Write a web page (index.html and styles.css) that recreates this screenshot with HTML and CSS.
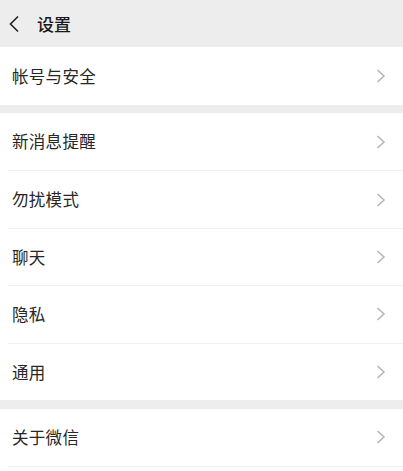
FILE: index.html
```html
<!DOCTYPE html>
<html lang="zh-CN">
<head>
<meta charset="utf-8">
<title>设置</title>
<link rel="stylesheet" href="styles.css">
</head>
<body>
<div class="page">
  <header class="topbar">
    <svg class="back" width="12" height="18" viewBox="0 0 12 18"><path d="M10 1.5 L2.5 9 L10 16.5" fill="none" stroke="#222" stroke-width="1.6"/></svg>
    <span class="title">设置</span>
  </header>
  <div class="group first">
    <div class="row"><span class="label">帐号与安全</span><svg class="arrow" width="10" height="14" viewBox="0 0 10 14"><path d="M1.5 1 L8 7 L1.5 13" fill="none" stroke="#b4b4b4" stroke-width="1.5"/></svg></div>
  </div>
  <div class="group">
    <div class="row"><span class="label">新消息提醒</span><svg class="arrow" width="10" height="14" viewBox="0 0 10 14"><path d="M1.5 1 L8 7 L1.5 13" fill="none" stroke="#b4b4b4" stroke-width="1.5"/></svg></div>
    <div class="row"><span class="label">勿扰模式</span><svg class="arrow" width="10" height="14" viewBox="0 0 10 14"><path d="M1.5 1 L8 7 L1.5 13" fill="none" stroke="#b4b4b4" stroke-width="1.5"/></svg></div>
    <div class="row"><span class="label">聊天</span><svg class="arrow" width="10" height="14" viewBox="0 0 10 14"><path d="M1.5 1 L8 7 L1.5 13" fill="none" stroke="#b4b4b4" stroke-width="1.5"/></svg></div>
    <div class="row"><span class="label">隐私</span><svg class="arrow" width="10" height="14" viewBox="0 0 10 14"><path d="M1.5 1 L8 7 L1.5 13" fill="none" stroke="#b4b4b4" stroke-width="1.5"/></svg></div>
    <div class="row"><span class="label">通用</span><svg class="arrow" width="10" height="14" viewBox="0 0 10 14"><path d="M1.5 1 L8 7 L1.5 13" fill="none" stroke="#b4b4b4" stroke-width="1.5"/></svg></div>
  </div>
  <div class="group last">
    <div class="row"><span class="label">关于微信</span><svg class="arrow" width="10" height="14" viewBox="0 0 10 14"><path d="M1.5 1 L8 7 L1.5 13" fill="none" stroke="#b4b4b4" stroke-width="1.5"/></svg></div>
    <div class="row"></div>
  </div>
</div>
</body>
</html>
```
FILE: styles.css
```css
html, body {
  margin: 0;
  padding: 0;
  background: #ffffff;
}
.page {
  width: 403px;
  height: 471px;
  overflow: hidden;
  background: #ededed;
  font-family: "Noto Sans CJK SC", "Noto Sans", sans-serif;
  color: #222222;
}
.topbar {
  height: 47px;
  display: flex;
  align-items: center;
  padding-left: 8px;
  box-sizing: border-box;
}
.back {
  display: block;
  margin-top: 1px;
}
.title {
  margin-left: 17px;
  font-size: 17px;
  font-weight: 500;
  color: #181818;
  line-height: 1;
}
.group {
  background: #ffffff;
  margin-top: 8px;
  padding-left: 8px;
}
.group.first {
  margin-top: 0;
}
.group.last {
  margin-top: 9px;
}
.row {
  height: 57.4px;
  box-sizing: border-box;
  display: flex;
  align-items: center;
  justify-content: space-between;
  padding-left: 4px;
  padding-right: 17px;
  border-top: 1px solid #f1f1f1;
}
.group.first .row {
  height: 58px;
}
.row:first-child {
  border-top: none;
}
.group.last .row {
  height: 57px;
}
.group.last .row + .row {
  height: 58px;
}
.label {
  font-size: 16.5px;
  line-height: 1;
  color: #262626;
  letter-spacing: 0.3px;
}
.arrow {
  display: block;
}
```
